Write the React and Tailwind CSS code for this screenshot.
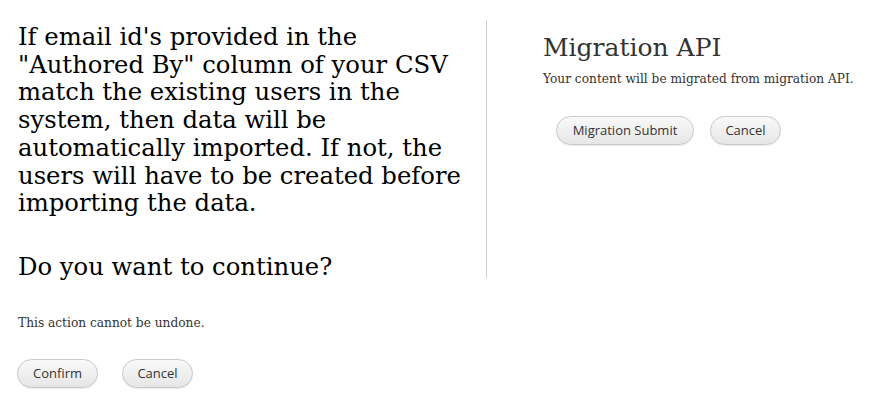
export default function App() {
  const btn =
    "h-[29px] rounded-full border border-[#c9c9c9] bg-gradient-to-b from-[#f9f9f9] to-[#e6e6e6] text-[13px] text-[#333] shadow-[0_1px_1px_rgba(0,0,0,0.08)] leading-none";
  return (
    <div className="min-h-[415px] w-[888px] bg-white font-['DejaVu_Serif',serif]">
      <div className="flex pt-[20px]">
        <div className="w-[487px] h-[258px] shrink-0 border-r border-[#cfcfcf] pl-[18px] pr-[10px]">
          <p className="text-[24.3px] leading-[27.7px] text-black pt-[3px]">
            If email id's provided in the "Authored By" column of your CSV match the existing users in the system, then data will be automatically imported. If not, the users will have to be created before importing the data.
          </p>
          <p className="mt-[36px] text-[24.3px] leading-[27.7px] text-black">Do you want to continue?</p>
        </div>
        <div className="pl-[56px]">
          <h2 className="pt-[14px] text-[25px] leading-[28px] text-[#333]">Migration API</h2>
          <p className="mt-[9px] text-[12.2px] leading-[16px] text-[#333]">Your content will be migrated from migration API.</p>
          <div className="mt-[29px] ml-[13px] flex gap-[16px] font-['Open_Sans',sans-serif]">
            <button className={`${btn} w-[138px]`}>Migration Submit</button>
            <button className={`${btn} w-[71px]`}>Cancel</button>
          </div>
        </div>
      </div>
      <div className="pl-[18px]">
        <p className="mt-[37px] text-[12.2px] leading-[16px] text-[#333]">This action cannot be undone.</p>
        <div className="mt-[28px] flex gap-[24px] font-['Open_Sans',sans-serif] -ml-[1px]">
          <button className={`${btn} w-[81px]`}>Confirm</button>
          <button className={`${btn} w-[71px]`}>Cancel</button>
        </div>
      </div>
    </div>
  );
}
